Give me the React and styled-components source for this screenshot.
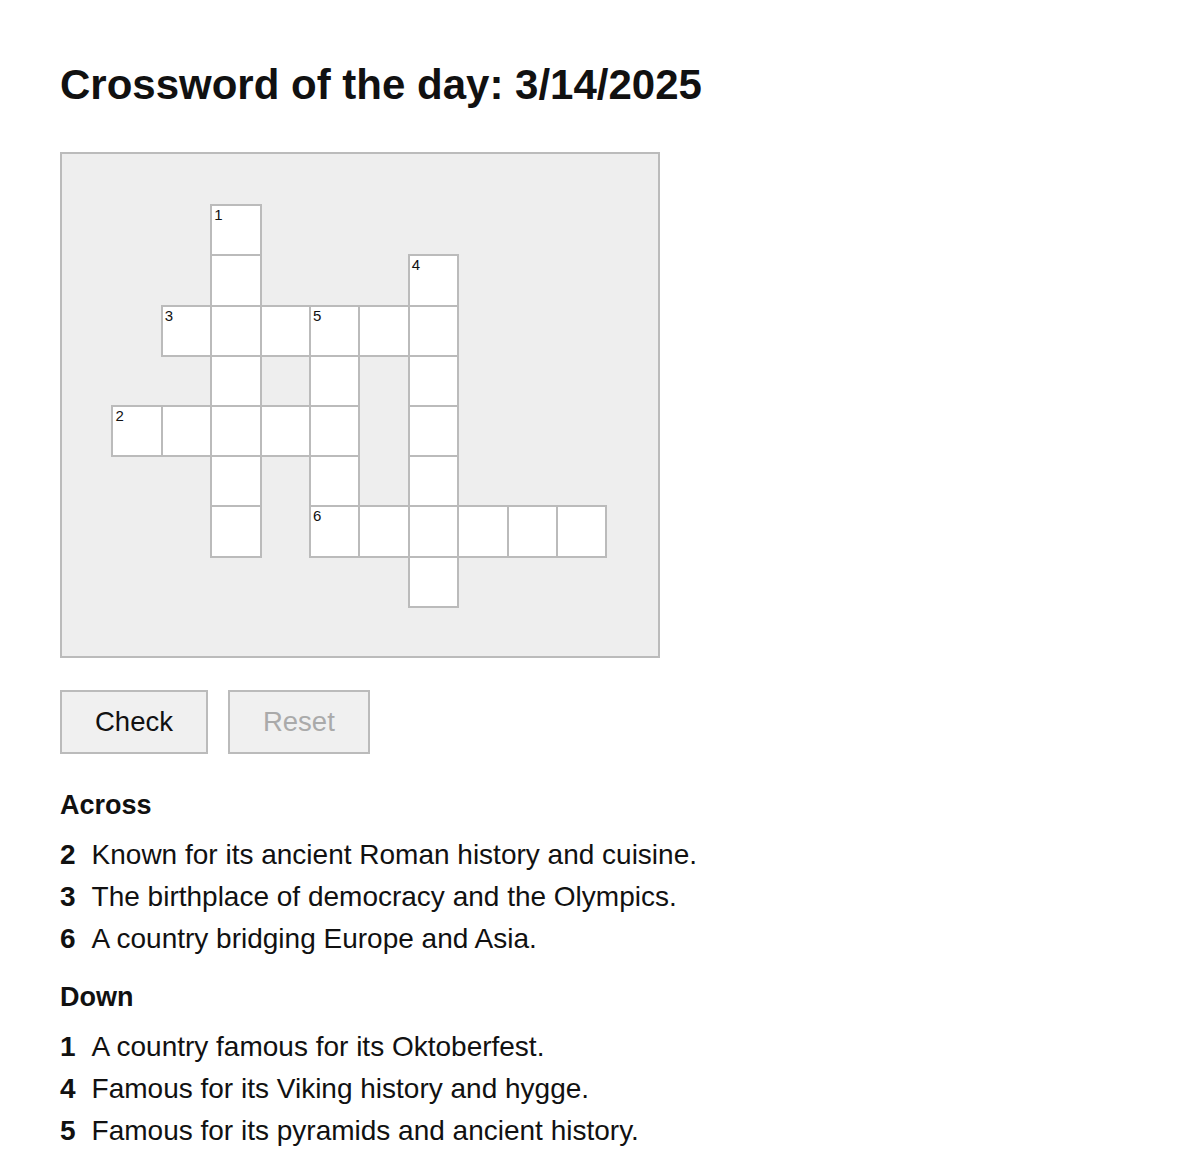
import React from "react";
import styled, { createGlobalStyle } from "styled-components";

//Puzzle data
const cells = [
  // 1 down: GERMANY
  ...[1, 2, 3, 4, 5, 6, 7].map((r) => [3, r]),
  // 4 down: DENMARK
  ...[2, 3, 4, 5, 6, 7, 8].map((r) => [7, r]),
  // 5 down: EGYPT
  ...[3, 4, 5, 6, 7].map((r) => [5, r]),
  // 3 across: GREECE
  ...[2, 3, 4, 5, 6, 7].map((c) => [c, 3]),
  // 2 across: ITALY
  ...[1, 2, 3, 4, 5].map((c) => [c, 5]),
  // 6 across: TURKEY
  ...[5, 6, 7, 8, 9, 10].map((c) => [c, 7]),
];

const numbers = {
  "3-1": 1,
  "7-2": 4,
  "2-3": 3,
  "5-3": 5,
  "1-5": 2,
  "5-7": 6,
};

const across = [
  { n: 2, text: "Known for its ancient Roman history and cuisine." },
  { n: 3, text: "The birthplace of democracy and the Olympics." },
  { n: 6, text: "A country bridging Europe and Asia." },
];

const down = [
  { n: 1, text: "A country famous for its Oktoberfest." },
  { n: 4, text: "Famous for its Viking history and hygge." },
  { n: 5, text: "Famous for its pyramids and ancient history." },
];

const uniqueCells = () => {
  const seen = {};
  return cells.filter(([c, r]) => {
    const key = `${c}-${r}`;
    if (seen[key]) return false;
    seen[key] = true;
    return true;
  });
};

const App = () => {
  return (
    <>
      <GlobalStyle />
      <Page>
        <Title>Crossword of the day: 3/14/2025</Title>
        <Board>
          {uniqueCells().map(([c, r]) => {
            const key = `${c}-${r}`;
            return (
              <Cell key={key} $col={c} $row={r}>
                {numbers[key] && <Num>{numbers[key]}</Num>}
              </Cell>
            );
          })}
        </Board>
        <Actions>
          <Button>Check</Button>
          <Button disabled>Reset</Button>
        </Actions>
        <ClueHeading>Across</ClueHeading>
        <ClueList>
          {across.map((clue) => (
            <Clue key={clue.n}>
              <ClueNum>{clue.n}</ClueNum>
              {clue.text}
            </Clue>
          ))}
        </ClueList>
        <ClueHeading>Down</ClueHeading>
        <ClueList>
          {down.map((clue) => (
            <Clue key={clue.n}>
              <ClueNum>{clue.n}</ClueNum>
              {clue.text}
            </Clue>
          ))}
        </ClueList>
      </Page>
    </>
  );
};

const GlobalStyle = createGlobalStyle`
  body {
    margin: 0;
    background: #fff;
    color: #111;
    font-family: "Liberation Sans", Arial, sans-serif;
  }
`;

const Page = styled.div`
  padding: 60px 60px 0;
`;

const Title = styled.h1`
  margin: 0;
  font-size: 42px;
  line-height: 50px;
  font-weight: 700;
`;

const Board = styled.div`
  margin-top: 42px;
  width: 600px;
  height: 506px;
  box-sizing: border-box;
  border: 2px solid #bbb;
  background: #eee;
  display: grid;
  grid-template-columns: repeat(12, 49.4px);
  grid-template-rows: repeat(10, 1fr);
`;

const Cell = styled.div`
  grid-column: ${(p) => p.$col + 1};
  grid-row: ${(p) => p.$row + 1};
  position: relative;
  box-sizing: border-box;
  width: calc(100% + 2px);
  height: calc(100% + 2px);
  border: 2px solid #bbb;
  background: #fff;
`;

const Num = styled.span`
  position: absolute;
  top: 0;
  left: 2px;
  font-size: 15px;
  line-height: 17px;
  color: #111;
`;

const Actions = styled.div`
  display: flex;
  gap: 20px;
  margin-top: 32px;
`;

const Button = styled.button`
  font-family: "Liberation Sans", Arial, sans-serif;
  font-size: 27.5px;
  line-height: 32px;
  padding: 14px 33px;
  border: 2px solid #bbb;
  border-radius: 0;
  background: #f0f0f0;
  color: #111;
  cursor: pointer;
  &:disabled {
    color: #aaa;
    cursor: default;
  }
`;

const ClueHeading = styled.h3`
  margin: 35px 0 13px;
  font-size: 27px;
  line-height: 32px;
  font-weight: 700;
`;

const ClueList = styled.ul`
  list-style: none;
  margin: 0;
  padding: 0;
  & + h3 {
    margin-top: 21px;
  }
`;

const Clue = styled.li`
  font-size: 28px;
  line-height: 42px;
`;

const ClueNum = styled.b`
  margin-right: 16px;
`;

export default App;
